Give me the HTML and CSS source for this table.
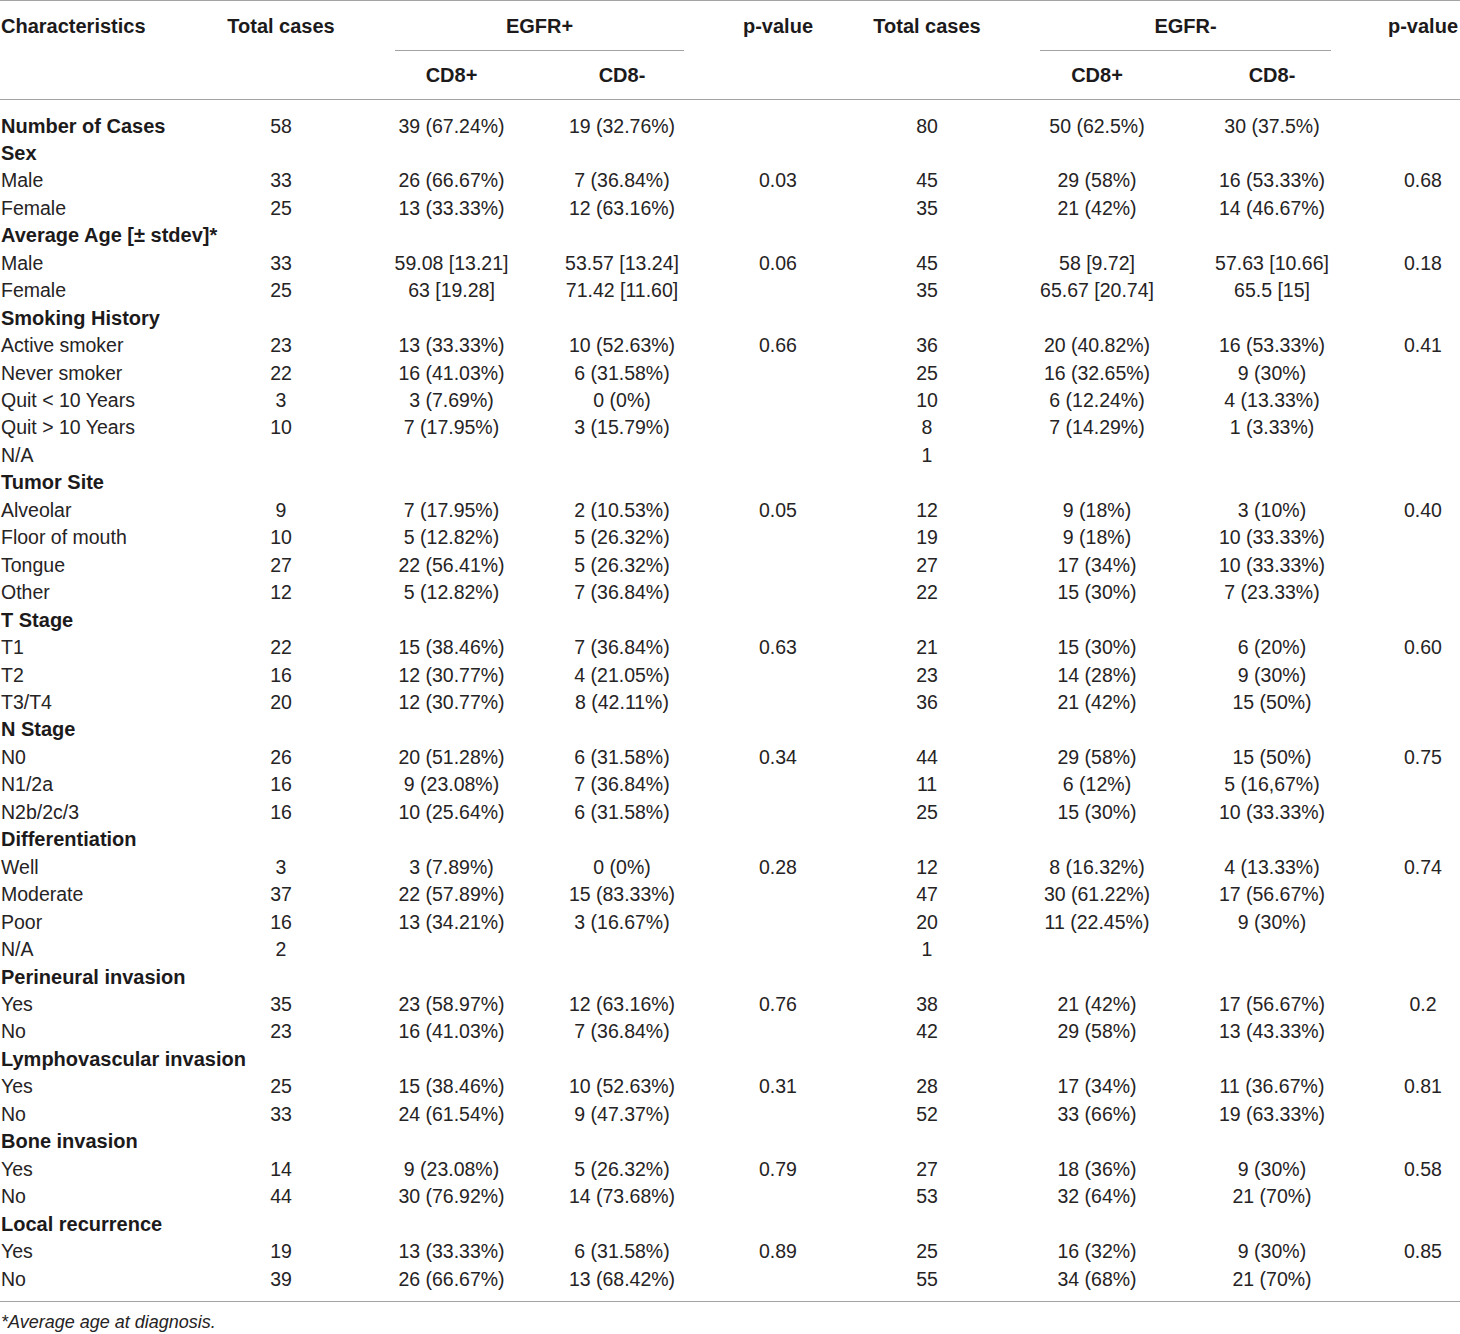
FILE: index.html
```html
<!DOCTYPE html>
<html lang="en">
<head>
<meta charset="utf-8">
<title>Table</title>
<link rel="stylesheet" href="styles.css">
</head>
<body>
<table class="data">
  <colgroup>
    <col class="c1"><col class="c2"><col class="c3"><col class="c4"><col class="c5"><col class="c6"><col class="c7"><col class="c8"><col class="c9">
  </colgroup>
  <thead>
    <tr class="h1">
      <th class="lab">Characteristics</th>
      <th>Total cases</th>
      <th colspan="2" class="grp grp-pos"><div class="grp-in">EGFR+</div></th>
      <th>p-value</th>
      <th>Total cases</th>
      <th colspan="2" class="grp grp-neg"><div class="grp-in">EGFR-</div></th>
      <th>p-value</th>
    </tr>
    <tr class="h2">
      <th class="lab"></th>
      <th></th>
      <th>CD8+</th>
      <th>CD8-</th>
      <th></th>
      <th></th>
      <th>CD8+</th>
      <th class="pr">CD8-</th>
      <th></th>
    </tr>
  </thead>
  <tbody>
    <tr class="first"><td class="lab sec">Number of Cases</td><td>58</td><td>39 (67.24%)</td><td>19 (32.76%)</td><td></td><td>80</td><td>50 (62.5%)</td><td class="pr">30 (37.5%)</td><td></td></tr>
    <tr><td class="lab sec">Sex</td><td></td><td></td><td></td><td></td><td></td><td></td><td class="pr"></td><td></td></tr>
    <tr><td class="lab">Male</td><td>33</td><td>26 (66.67%)</td><td>7 (36.84%)</td><td>0.03</td><td>45</td><td>29 (58%)</td><td class="pr">16 (53.33%)</td><td>0.68</td></tr>
    <tr><td class="lab">Female</td><td>25</td><td>13 (33.33%)</td><td>12 (63.16%)</td><td></td><td>35</td><td>21 (42%)</td><td class="pr">14 (46.67%)</td><td></td></tr>
    <tr><td class="lab sec">Average Age [± stdev]*</td><td></td><td></td><td></td><td></td><td></td><td></td><td class="pr"></td><td></td></tr>
    <tr><td class="lab">Male</td><td>33</td><td>59.08 [13.21]</td><td>53.57 [13.24]</td><td>0.06</td><td>45</td><td>58 [9.72]</td><td class="pr">57.63 [10.66]</td><td>0.18</td></tr>
    <tr><td class="lab">Female</td><td>25</td><td>63 [19.28]</td><td>71.42 [11.60]</td><td></td><td>35</td><td>65.67 [20.74]</td><td class="pr">65.5 [15]</td><td></td></tr>
    <tr><td class="lab sec">Smoking History</td><td></td><td></td><td></td><td></td><td></td><td></td><td class="pr"></td><td></td></tr>
    <tr><td class="lab">Active smoker</td><td>23</td><td>13 (33.33%)</td><td>10 (52.63%)</td><td>0.66</td><td>36</td><td>20 (40.82%)</td><td class="pr">16 (53.33%)</td><td>0.41</td></tr>
    <tr><td class="lab">Never smoker</td><td>22</td><td>16 (41.03%)</td><td>6 (31.58%)</td><td></td><td>25</td><td>16 (32.65%)</td><td class="pr">9 (30%)</td><td></td></tr>
    <tr><td class="lab">Quit &lt; 10 Years</td><td>3</td><td>3 (7.69%)</td><td>0 (0%)</td><td></td><td>10</td><td>6 (12.24%)</td><td class="pr">4 (13.33%)</td><td></td></tr>
    <tr><td class="lab">Quit &gt; 10 Years</td><td>10</td><td>7 (17.95%)</td><td>3 (15.79%)</td><td></td><td>8</td><td>7 (14.29%)</td><td class="pr">1 (3.33%)</td><td></td></tr>
    <tr><td class="lab">N/A</td><td></td><td></td><td></td><td></td><td>1</td><td></td><td class="pr"></td><td></td></tr>
    <tr><td class="lab sec">Tumor Site</td><td></td><td></td><td></td><td></td><td></td><td></td><td class="pr"></td><td></td></tr>
    <tr><td class="lab">Alveolar</td><td>9</td><td>7 (17.95%)</td><td>2 (10.53%)</td><td>0.05</td><td>12</td><td>9 (18%)</td><td class="pr">3 (10%)</td><td>0.40</td></tr>
    <tr><td class="lab">Floor of mouth</td><td>10</td><td>5 (12.82%)</td><td>5 (26.32%)</td><td></td><td>19</td><td>9 (18%)</td><td class="pr">10 (33.33%)</td><td></td></tr>
    <tr><td class="lab">Tongue</td><td>27</td><td>22 (56.41%)</td><td>5 (26.32%)</td><td></td><td>27</td><td>17 (34%)</td><td class="pr">10 (33.33%)</td><td></td></tr>
    <tr><td class="lab">Other</td><td>12</td><td>5 (12.82%)</td><td>7 (36.84%)</td><td></td><td>22</td><td>15 (30%)</td><td class="pr">7 (23.33%)</td><td></td></tr>
    <tr><td class="lab sec">T Stage</td><td></td><td></td><td></td><td></td><td></td><td></td><td class="pr"></td><td></td></tr>
    <tr><td class="lab">T1</td><td>22</td><td>15 (38.46%)</td><td>7 (36.84%)</td><td>0.63</td><td>21</td><td>15 (30%)</td><td class="pr">6 (20%)</td><td>0.60</td></tr>
    <tr><td class="lab">T2</td><td>16</td><td>12 (30.77%)</td><td>4 (21.05%)</td><td></td><td>23</td><td>14 (28%)</td><td class="pr">9 (30%)</td><td></td></tr>
    <tr><td class="lab">T3/T4</td><td>20</td><td>12 (30.77%)</td><td>8 (42.11%)</td><td></td><td>36</td><td>21 (42%)</td><td class="pr">15 (50%)</td><td></td></tr>
    <tr><td class="lab sec">N Stage</td><td></td><td></td><td></td><td></td><td></td><td></td><td class="pr"></td><td></td></tr>
    <tr><td class="lab">N0</td><td>26</td><td>20 (51.28%)</td><td>6 (31.58%)</td><td>0.34</td><td>44</td><td>29 (58%)</td><td class="pr">15 (50%)</td><td>0.75</td></tr>
    <tr><td class="lab">N1/2a</td><td>16</td><td>9 (23.08%)</td><td>7 (36.84%)</td><td></td><td>11</td><td>6 (12%)</td><td class="pr">5 (16,67%)</td><td></td></tr>
    <tr><td class="lab">N2b/2c/3</td><td>16</td><td>10 (25.64%)</td><td>6 (31.58%)</td><td></td><td>25</td><td>15 (30%)</td><td class="pr">10 (33.33%)</td><td></td></tr>
    <tr><td class="lab sec">Differentiation</td><td></td><td></td><td></td><td></td><td></td><td></td><td class="pr"></td><td></td></tr>
    <tr><td class="lab">Well</td><td>3</td><td>3 (7.89%)</td><td>0 (0%)</td><td>0.28</td><td>12</td><td>8 (16.32%)</td><td class="pr">4 (13.33%)</td><td>0.74</td></tr>
    <tr><td class="lab">Moderate</td><td>37</td><td>22 (57.89%)</td><td>15 (83.33%)</td><td></td><td>47</td><td>30 (61.22%)</td><td class="pr">17 (56.67%)</td><td></td></tr>
    <tr><td class="lab">Poor</td><td>16</td><td>13 (34.21%)</td><td>3 (16.67%)</td><td></td><td>20</td><td>11 (22.45%)</td><td class="pr">9 (30%)</td><td></td></tr>
    <tr><td class="lab">N/A</td><td>2</td><td></td><td></td><td></td><td>1</td><td></td><td class="pr"></td><td></td></tr>
    <tr><td class="lab sec">Perineural invasion</td><td></td><td></td><td></td><td></td><td></td><td></td><td class="pr"></td><td></td></tr>
    <tr><td class="lab">Yes</td><td>35</td><td>23 (58.97%)</td><td>12 (63.16%)</td><td>0.76</td><td>38</td><td>21 (42%)</td><td class="pr">17 (56.67%)</td><td>0.2</td></tr>
    <tr><td class="lab">No</td><td>23</td><td>16 (41.03%)</td><td>7 (36.84%)</td><td></td><td>42</td><td>29 (58%)</td><td class="pr">13 (43.33%)</td><td></td></tr>
    <tr><td class="lab sec">Lymphovascular invasion</td><td></td><td></td><td></td><td></td><td></td><td></td><td class="pr"></td><td></td></tr>
    <tr><td class="lab">Yes</td><td>25</td><td>15 (38.46%)</td><td>10 (52.63%)</td><td>0.31</td><td>28</td><td>17 (34%)</td><td class="pr">11 (36.67%)</td><td>0.81</td></tr>
    <tr><td class="lab">No</td><td>33</td><td>24 (61.54%)</td><td>9 (47.37%)</td><td></td><td>52</td><td>33 (66%)</td><td class="pr">19 (63.33%)</td><td></td></tr>
    <tr><td class="lab sec">Bone invasion</td><td></td><td></td><td></td><td></td><td></td><td></td><td class="pr"></td><td></td></tr>
    <tr><td class="lab">Yes</td><td>14</td><td>9 (23.08%)</td><td>5 (26.32%)</td><td>0.79</td><td>27</td><td>18 (36%)</td><td class="pr">9 (30%)</td><td>0.58</td></tr>
    <tr><td class="lab">No</td><td>44</td><td>30 (76.92%)</td><td>14 (73.68%)</td><td></td><td>53</td><td>32 (64%)</td><td class="pr">21 (70%)</td><td></td></tr>
    <tr><td class="lab sec">Local recurrence</td><td></td><td></td><td></td><td></td><td></td><td></td><td class="pr"></td><td></td></tr>
    <tr><td class="lab">Yes</td><td>19</td><td>13 (33.33%)</td><td>6 (31.58%)</td><td>0.89</td><td>25</td><td>16 (32%)</td><td class="pr">9 (30%)</td><td>0.85</td></tr>
    <tr class="last"><td class="lab">No</td><td>39</td><td>26 (66.67%)</td><td>13 (68.42%)</td><td></td><td>55</td><td>34 (68%)</td><td class="pr">21 (70%)</td><td></td></tr>
  </tbody>
</table>
<p class="note">*Average age at diagnosis.</p>
</body>
</html>
```

FILE: styles.css
```css
html, body {
  margin: 0;
  padding: 0;
  background: #ffffff;
}

body {
  width: 1460px;
  overflow: hidden;
  font-family: "Liberation Sans", Arial, Helvetica, sans-serif;
  color: #262324;
}

.data {
  width: 1460px;
  table-layout: fixed;
  border-collapse: separate;
  border-spacing: 0;
  border-top: 1px solid #a3a3a3;
}

.c1 { width: 195px; }
.c2 { width: 172px; }
.c3 { width: 169px; }
.c4 { width: 172px; }
.c5 { width: 140px; }
.c6 { width: 158px; }
.c7 { width: 182px; }
.c8 { width: 198px; }
.c9 { width: 74px; }

.data th,
.data td {
  padding: 0;
  text-align: center;
  vertical-align: top;
  white-space: nowrap;
}

.data th {
  font-size: 20px;
  font-weight: bold;
  line-height: 24px;
  color: #1c1a1b;
}

.data .lab {
  text-align: left;
  padding-left: 1px;
}

.data .pr {
  padding-right: 30px;
}

/* header row 1 */
.data .h1 th {
  padding-top: 13px;
  height: 37px;
}

.data .h1 .grp {
  height: auto;
  padding-bottom: 0;
}

.grp-in {
  padding-bottom: 12px;
  border-bottom: 1px solid #a3a3a3;
}

.data .h1 .grp-pos {
  padding-left: 3px;
}

.grp-pos .grp-in {
  margin-left: 25px;
  margin-right: 24px;
}

.data .h1 .grp-neg {
  padding-right: 22px;
}

.grp-neg .grp-in {
  margin-left: 34px;
  margin-right: 33px;
}

/* header row 2 */
.data .h2 th {
  padding-top: 12px;
  padding-bottom: 12px;
  height: 24px;
  border-bottom: 1px solid #a3a3a3;
}

/* body */
.data td {
  font-size: 19.5px;
  line-height: 27.46px;
  height: 27.46px;
}

.data td.sec {
  font-size: 20px;
  font-weight: bold;
  color: #1c1a1b;
}

.data .first td {
  padding-top: 12.5px;
}

.data .last td {
  padding-bottom: 8px;
  border-bottom: 1px solid #a3a3a3;
}

.note {
  margin: 8px 0 0 0;
  padding-left: 1px;
  font-size: 18px;
  line-height: 24px;
  font-style: italic;
  color: #262324;
}
```
